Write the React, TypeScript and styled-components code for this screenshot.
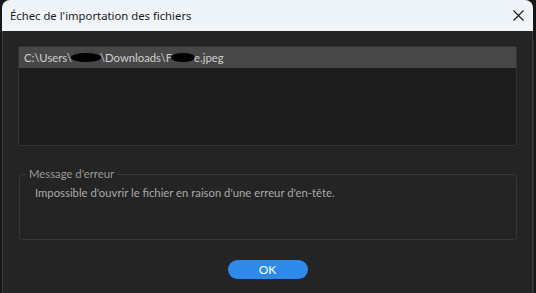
import styled, {createGlobalStyle} from "styled-components";

const GlobalStyle = createGlobalStyle`
    html, body {
        margin: 0;
        padding: 0;
        background: #171717;
        width: 536px;
        height: 293px;
        overflow: hidden;
    }
`;

export default function App() {
    return (
        <>
            <GlobalStyle/>
            <Screen>
                <Window>
                    <TitleBar>
                        <Title>Échec de l'importation des fichiers</Title>
                        <CloseButton aria-label="Fermer">
                            <svg width="11" height="11" viewBox="0 0 11 11">
                                <path d="M0.5 0.5L10.5 10.5M10.5 0.5L0.5 10.5" stroke="#1a1a1a" strokeWidth="1.1" fill="none"/>
                            </svg>
                        </CloseButton>
                    </TitleBar>
                    <Body>
                        <FileList>
                            <FileRow selected>
                                C:\Users\<Redacted w={30}/>\Downloads\F<Redacted w={24}/>e.jpeg
                            </FileRow>
                        </FileList>
                        <ErrorBox>
                            <Legend>Message d'erreur</Legend>
                            <ErrorText>Impossible d'ouvrir le fichier en raison d'une erreur d'en-tête.</ErrorText>
                        </ErrorBox>
                        <Footer>
                            <OkButton>OK</OkButton>
                        </Footer>
                    </Body>
                </Window>
                <EdgeStrip/>
            </Screen>
        </>
    );
}

const Screen = styled.div`
    display: flex;
    height: 293px;
    padding-left: 2px;
    box-sizing: border-box;
`;

const Window = styled.div`
    width: 531px;
    height: 300px;
    flex: none;
    display: flex;
    flex-direction: column;
    border-radius: 8px 8px 0 0;
    overflow: hidden;
    background: #242424;
    box-shadow: inset 1px 0 0 #3a3a3a, inset -1px 0 0 #3a3a3a;
`;

const EdgeStrip = styled.div`
    flex: 1;
    margin-top: 40px;
    border-left: 1px solid #2e2e2e;
`;

const TitleBar = styled.div`
    height: 31px;
    flex: none;
    display: flex;
    align-items: center;
    justify-content: space-between;
    background: #eff4f9;
    padding: 0 0 0 8px;
`;

const Title = styled.div`
    font-family: "Noto Sans", sans-serif;
    font-size: 11.3px;
    color: #1b1b1b;
`;

const CloseButton = styled.div`
    width: 30px;
    height: 31px;
    display: flex;
    align-items: center;
    justify-content: center;
`;

const Body = styled.div`
    flex: 1;
    display: flex;
    flex-direction: column;
    padding: 15px 16px 0 16px;
    font-family: Lato, "Noto Sans", sans-serif;
    font-size: 11.3px;
`;

const FileList = styled.div`
    height: 100px;
    box-sizing: border-box;
    background: #1d1d1d;
    border: 1px solid #333;
    border-radius: 2px;
`;

const FileRow = styled.div<{selected?: boolean}>`
    height: 21px;
    display: flex;
    align-items: center;
    padding-left: 5px;
    color: #cfcfcf;
    background: ${p => p.selected ? "#474747" : "transparent"};
    white-space: pre;
`;

const Redacted = styled.span<{w: number}>`
    display: inline-block;
    width: ${p => p.w}px;
    height: 9px;
    background: #000;
    border-radius: 50%;
    margin: 0 -1px;
`;

const ErrorBox = styled.fieldset`
    margin: 21px 0 0 1px;
    height: 73px;
    box-sizing: border-box;
    border: 1px solid #363636;
    border-radius: 3px;
    padding: 0 0 0 15px;
`;

const Legend = styled.legend`
    color: #9a9a9a;
    padding: 0 3px;
    margin-left: -9px;
    line-height: 14px;
`;

const ErrorText = styled.div`
    color: #a9a9a9;
    margin-top: 5px;
`;

const Footer = styled.div`
    display: flex;
    justify-content: center;
    padding-top: 20px;
`;

const OkButton = styled.button`
    width: 80px;
    height: 19px;
    border: none;
    border-radius: 10px;
    background: #2d8ae8;
    color: #fff;
    font-family: Lato, "Noto Sans", sans-serif;
    font-size: 12px;
    padding: 0;
`;
